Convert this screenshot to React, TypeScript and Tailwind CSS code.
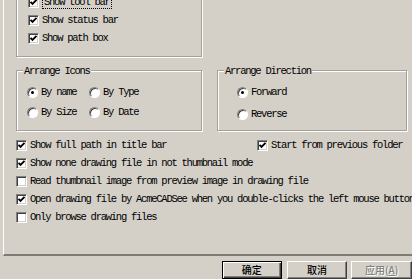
import React from "react";

const mono = "font-['Liberation_Mono','DejaVu_Sans_Mono',monospace] text-[10.5px] leading-[10px] tracking-[-1.25px]";

function CheckBox({ checked }: { checked?: boolean }) {
  return (
    <span className="w-[11px] h-[11px] shrink-0 bg-white border border-t-[#808080] border-l-[#808080] border-b-white border-r-white shadow-[inset_1px_1px_0_#404040,inset_-1px_-1px_0_#d4d0c8] flex items-center justify-center">
      {checked && (
        <svg width="9" height="9" viewBox="0 0 9 9">
          <polyline points="1.5,3.8 3.5,5.8 7.5,1.8" fill="none" stroke="#000" strokeWidth="1.9" />
        </svg>
      )}
    </span>
  );
}

function Radio({ checked }: { checked?: boolean }) {
  return (
    <span className="w-[11px] h-[11px] shrink-0 rounded-full bg-white border border-t-[#808080] border-l-[#808080] border-b-white border-r-white shadow-[inset_1px_1px_0_#404040] flex items-center justify-center">
      {checked && <span className="w-[3px] h-[3px] rounded-full bg-black" />}
    </span>
  );
}

function CheckRow({ label, checked, focus }: { label: string; checked?: boolean; focus?: boolean }) {
  return (
    <div className="h-[18px] flex items-center gap-[3px] whitespace-nowrap">
      <CheckBox checked={checked} />
      <span className={focus ? "border border-dotted border-black px-[1px] py-[1px]" : ""}>{label}</span>
    </div>
  );
}

function RadioRow({ label, checked }: { label: string; checked?: boolean }) {
  return (
    <div className="h-[18px] flex items-center gap-[3px] whitespace-nowrap">
      <Radio checked={checked} />
      <span>{label}</span>
    </div>
  );
}

function GroupBox({ title, className, children }: { title: string; className: string; children: React.ReactNode }) {
  return (
    <div className={`relative border border-[#a4a09a] shadow-[inset_1px_1px_0_#fff,1px_1px_0_#fff] ${className}`}>
      <span className="absolute top-[-5px] left-[6px] bg-[#d4d0c8] px-[1px] whitespace-nowrap">{title}</span>
      {children}
    </div>
  );
}

function Button({ children, isDefault, disabled }: { children: React.ReactNode; isDefault?: boolean; disabled?: boolean }) {
  const frame = isDefault
    ? "border border-black shadow-[inset_1px_1px_0_#fff,inset_-1px_-1px_0_#404040,inset_-2px_-2px_0_#808080]"
    : "border border-t-white border-l-white border-b-[#404040] border-r-[#404040] shadow-[inset_-1px_-1px_0_#808080]";
  return (
    <div
      className={`h-[18px] shrink-0 flex items-center justify-center bg-[#d4d0c8] font-['Noto_Sans_CJK_SC','Noto_Sans',sans-serif] font-medium text-[10px] leading-[10px] tracking-normal ${frame} ${
        disabled ? "text-[#808080] [text-shadow:1px_1px_0_#fff]" : "text-black"
      }`}
    >
      {children}
    </div>
  );
}

export default function App() {
  return (
    <div className={`w-[412px] h-[279px] overflow-hidden bg-[#d4d0c8] text-black ${mono}`}>
      {/* tab page */}
      <div className="ml-[3px] w-[430px] h-[256px] border-l border-l-white border-b-2 border-b-[#7f7b76] flex flex-col">
        {/* view options group (top edge scrolled off) */}
        <div className="ml-[12px] mt-[-10px] w-[186px] h-[67px] shrink-0 border border-[#a4a09a] shadow-[inset_1px_1px_0_#fff,1px_1px_0_#fff] pt-[2px] pl-[11px]">
          <CheckRow label="Show tool bar" checked focus />
          <CheckRow label="Show status bar" checked />
          <CheckRow label="Show path box" checked />
        </div>

        <div className="ml-[12px] mt-[13px] flex gap-[15px] shrink-0">
          <GroupBox title="Arrange Icons" className="w-[186px] h-[61px]">
            <div className="pt-[12px] pl-[10px] grid grid-cols-[62px_62px] gap-y-[2px]">
              <RadioRow label="By name" checked />
              <RadioRow label="By Type" />
              <RadioRow label="By Size" />
              <RadioRow label="By Date" />
            </div>
          </GroupBox>
          <GroupBox title="Arrange Direction" className="w-[190px] h-[61px]">
            <div className="pt-[12px] pl-[19px] flex flex-col gap-[4px]">
              <RadioRow label="Forward" checked />
              <RadioRow label="Reverse" />
            </div>
          </GroupBox>
        </div>

        <div className="ml-[12px] mt-[5px] flex flex-col">
          <div className="flex">
            <div className="w-[241px]">
              <CheckRow label="Show full path in title bar" checked />
            </div>
            <CheckRow label="Start from previous folder" checked />
          </div>
          <CheckRow label="Show none drawing file in not thumbnail mode" checked />
          <CheckRow label="Read thumbnail image from preview image in drawing file" />
          <CheckRow label="Open drawing file by AcmeCADSee when you double-clicks the left mouse button" checked />
          <CheckRow label="Only browse drawing files" />
        </div>
      </div>

      {/* dialog buttons */}
      <div className="mt-[5px] ml-[222px] flex">
        <div className="w-[63px]">
          <Button isDefault>确定</Button>
        </div>
        <div className="w-[64px] ml-[5px]">
          <Button>取消</Button>
        </div>
        <div className="w-[64px] ml-[4px]">
          <Button disabled>
            应用(<span className="underline">A</span>)
          </Button>
        </div>
      </div>
    </div>
  );
}
